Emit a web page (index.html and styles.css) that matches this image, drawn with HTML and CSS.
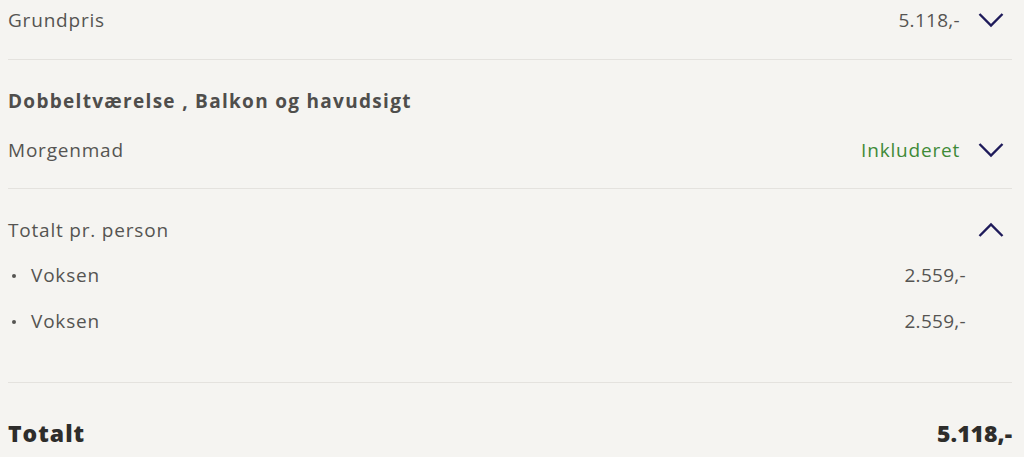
FILE: index.html
```html
<!DOCTYPE html>
<html lang="da">
<head>
  <meta charset="UTF-8" />
  <meta name="viewport" content="width=device-width, initial-scale=1" />
  <title>Prisoversigt</title>
  <link rel="stylesheet" href="styles.css">
</head>
<body>
  <main class="summary">
    <section class="block block-first">
      <div class="row">
        <span>Grundpris</span>
        <span class="right">
          <span class="amount">5.118,-</span>
          <svg class="chevron" viewBox="0 0 26 16"><path d="M1.5 2 L13 13.5 L24.5 2" /></svg>
        </span>
      </div>
    </section>

    <section class="block block-room">
      <div class="row heading">Dobbeltværelse , Balkon og havudsigt</div>
      <div class="row row-gap">
        <span>Morgenmad</span>
        <span class="right">
          <span class="included">Inkluderet</span>
          <svg class="chevron" viewBox="0 0 26 16"><path d="M1.5 2 L13 13.5 L24.5 2" /></svg>
        </span>
      </div>
    </section>

    <section class="block block-person">
      <div class="row">
        <span>Totalt pr. person</span>
        <svg class="chevron" viewBox="0 0 26 16"><path d="M1.5 14 L13 2.5 L24.5 14" /></svg>
      </div>
      <ul class="people">
        <li class="row"><span class="bullet">Voksen</span><span class="amount">2.559,-</span></li>
        <li class="row"><span class="bullet">Voksen</span><span class="amount">2.559,-</span></li>
      </ul>
    </section>

    <div class="row total">
      <span class="total-label">Totalt</span>
      <span>5.118,-</span>
    </div>
  </main>
</body>
</html>
```

FILE: styles.css
```css
body {
  margin: 0;
  padding: 0;
  background-color: #f5f4f1;
  color: #555452;
  font-family: "Open Sans", Lato, sans-serif;
  font-size: 19px;
  letter-spacing: 0.8px;
}
.summary {
  padding: 0 12px 0 8px;
}
.block {
  border-bottom: 1px solid #e4e2de;
}
.block-first {
  padding-bottom: 19px;
}
.block-room {
  padding: 21px 0 18px;
}
.block-person {
  padding: 21px 0 41px;
}
.row {
  display: flex;
  justify-content: space-between;
  align-items: center;
  height: 40px;
  line-height: 40px;
}
.row-gap {
  margin-top: 9px;
}
.heading {
  font-weight: bold;
  color: #4f4e4c;
  letter-spacing: 1.3px;
}
.amount {
  letter-spacing: 0.3px;
}
.right {
  display: flex;
  align-items: center;
  gap: 18px;
}
.included {
  color: #3f8a38;
}
.chevron {
  width: 26px;
  height: 16px;
  margin-right: 8px;
  fill: none;
  stroke: #1e1a5a;
  stroke-width: 2.4;
}
.people {
  list-style: none;
  margin: 5px 0 0;
  padding: 0 46px 0 0;
}
.people li + li {
  margin-top: 6px;
}
.bullet {
  position: relative;
  padding-left: 23px;
}
.bullet::before {
  content: "";
  position: absolute;
  left: 4px;
  top: 19px;
  width: 4px;
  height: 4px;
  border-radius: 50%;
  background-color: #555452;
}
.total {
  margin-top: 30px;
  font-size: 23px;
  font-weight: 800;
  color: #2e2d2b;
  letter-spacing: 0;
}
.total-label {
  letter-spacing: 1px;
}
```
